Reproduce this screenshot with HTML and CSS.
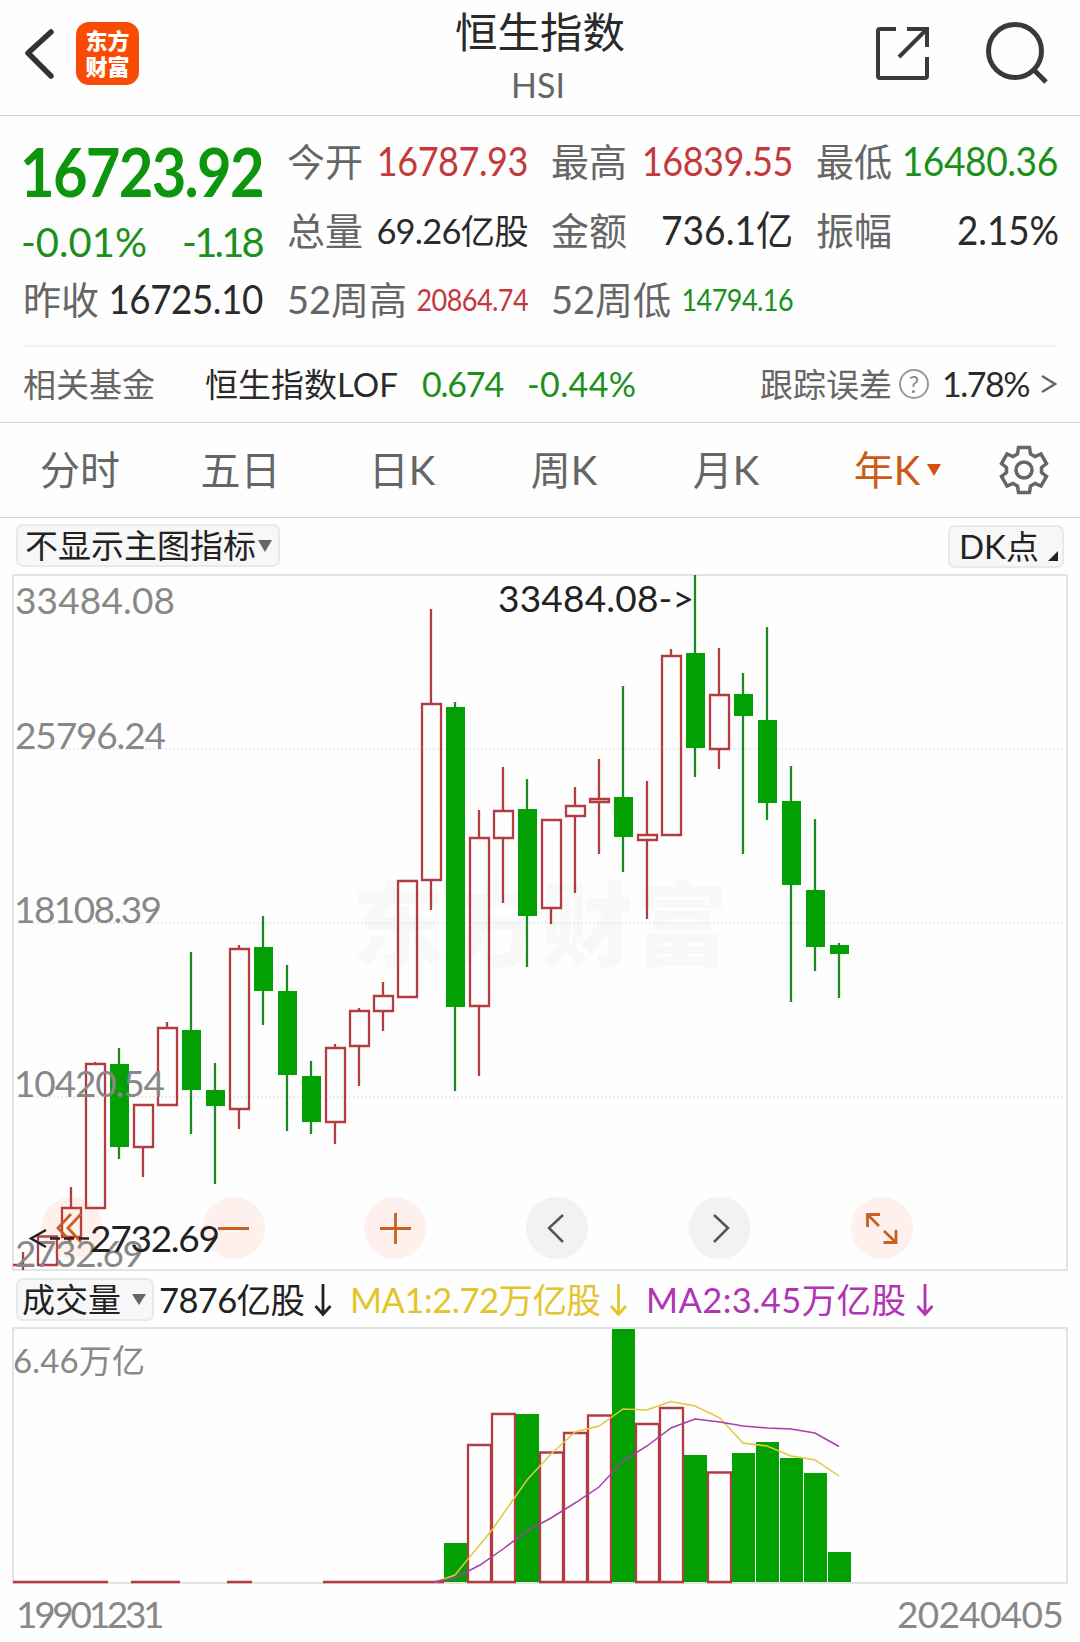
FILE: index.html
```html
<!DOCTYPE html>
<html lang="zh-CN">
<head>
<meta charset="utf-8">
<title>恒生指数 HSI</title>
<link rel="stylesheet" href="styles.css">
</head>
<body>
<header class="topbar">
  <div class="topbar-side">
    <svg class="back" width="32" height="56" viewBox="0 0 32 56"><path d="M27 7 4 28 27 51"/></svg>
    <div class="logo"><span>东方</span><span>财富</span></div>
  </div>
  <div class="titles">
    <h1>恒生指数</h1>
    <p>HSI</p>
  </div>
  <div class="topbar-side right">
    <svg class="share" width="56" height="56" viewBox="0 0 56 56"><path d="M22 4H6Q4 4 4 6V51Q4 53 6 53H51Q53 53 53 51V32M33 4H53V22M53 4 25 32"/></svg>
    <svg class="search" width="66" height="66" viewBox="0 0 66 66"><circle cx="31" cy="31" r="26.5"/><path d="M50 50 62 62"/></svg>
  </div>
</header>

<section class="quote">
  <div class="last">
    <div class="price">16723.92</div>
    <div class="change"><span class="pct">-0.01%</span><span class="chg">-1.18</span></div>
    <div class="prev"><span class="label">昨收</span><span class="num prev-num">16725.10</span></div>
  </div>
  <div class="stats">
    <div class="stat"><span class="label">今开</span><span class="num up">16787.93</span></div>
    <div class="stat"><span class="label">最高</span><span class="num up">16839.55</span></div>
    <div class="stat"><span class="label">最低</span><span class="num down wide">16480.36</span></div>
    <div class="stat"><span class="label">总量</span><span class="num mid">69.26亿股</span></div>
    <div class="stat"><span class="label">金额</span><span class="num amt">736.1亿</span></div>
    <div class="stat"><span class="label">振幅</span><span class="num ratio">2.15%</span></div>
    <div class="stat"><span class="label">52周高</span><span class="num small up">20864.74</span></div>
    <div class="stat"><span class="label">52周低</span><span class="num small down">14794.16</span></div>
  </div>
</section>

<section class="fund">
  <span class="fund-label">相关基金</span>
  <span class="fund-name">恒生指数LOF</span>
  <span class="fund-price down">0.674</span>
  <span class="fund-pct down">-0.44%</span>
  <span class="fund-err">跟踪误差</span>
  <span class="help">?</span>
  <span class="fund-val">1.78%</span>
  <svg class="more" width="16" height="20" viewBox="0 0 16 20"><path d="M1 2 14 10 1 18"/></svg>
</section>

<nav class="tabs">
  <span>分时</span><span>五日</span><span>日K</span><span>周K</span><span>月K</span>
  <span class="active">年K<i class="caret"></i></span>
  <svg class="gear" width="50" height="50" viewBox="-25 -25 50 50"><path d="M-5.500-22.500H5.500L6.500-16 11-13.500 17-16 22.500-6.500 17.500-2.500V2.500L22.500 6.500 17 16 11 13.500 6.500 16 5.500 22.500H-5.500L-6.500 16-11 13.500-17 16-22.500 6.500-17.500 2.500V-2.500L-22.500-6.500-17-16-11-13.500-6.500-16Z"/><circle r="8"/></svg>
</nav>

<div class="indicator">
  <button class="chip main-chip">不显示主图指标<i class="caret"></i></button>
  <button class="chip dk-chip">DK点<i class="corner"></i></button>
</div>

<div class="kchart">
  <svg width="1056" height="697" viewBox="12 574 1056 697">
    <text class="watermark" x="352" y="959" textLength="376">东方财富</text>
    <path class="grid" d="M13 749H1067M13 923H1067M13 1097H1067"/>
    <rect class="frame" x="13" y="575" width="1054" height="695"/>
    <path class="red" d="M23 1252V1270M13 1265H34M71 1187V1208M95 1062V1064M143 1148V1177M167 1022V1028M239 945V949M239 1110V1129M335 1044V1048M335 1122V1144M359 1008V1011M359 1046V1086M383 982V996M383 1011V1031M431 609V704M431 880V910M479 810V838M479 1006V1076M503 767V811M503 839V903M551 909V924M575 787V805M575 816V893M599 759V799M599 802V854M647 781V834M647 840V919M671 649V656M719 648V695M719 749V769"/>
    <path class="red" d="M38 1236.500H57V1265H38ZM62 1208H81V1237H62ZM86 1064H105V1208H86ZM134 1105H153V1147H134ZM158 1028H177V1105H158ZM230 949H249V1109H230ZM326 1048H345V1122H326ZM350 1011H369V1046H350ZM374 996H393V1011H374ZM398 881H417V997H398ZM422 704H441V880H422ZM470 838H489V1006H470ZM494 811H513V838H494ZM542 820H561V908H542ZM566 806H585V816H566ZM590 799H609V802H590ZM638 835H657V840H638ZM662 656H681V835H662ZM710 695H729V749H710Z"/>
    <path class="green-line" d="M119 1048V1159M191 952V1134M215 1063V1184M263 916V1025M287 965V1131M311 1061V1134M455 702V1091M527 779V967M623 686V872M695 575V777M743 673V854M767 627V820M791 766V1002M815 819V971M839 943V998"/>
    <path class="green" d="M110 1064h19v83h-19zM182 1030h19v60h-19zM206 1090h19v16h-19zM254 947h19v44h-19zM278 991h19v84h-19zM302 1076h19v46h-19zM446 707h19v300h-19zM518 809h19v107h-19zM614 797h19v40h-19zM686 653h19v95h-19zM734 694h19v22h-19zM758 720h19v83h-19zM782 801h19v84h-19zM806 890h19v57h-19zM830 945h19v9h-19z"/>
    <g class="hot"><circle cx="72" cy="1228" r="31"/><circle cx="234" cy="1228" r="31"/><circle cx="395" cy="1228" r="31"/><circle cx="882" cy="1228" r="31"/></g>
    <g class="calm"><circle cx="557" cy="1228" r="31"/><circle cx="719.500" cy="1228" r="31"/></g>
    <path class="hot-icon" d="M71 1214 58 1228 71 1242M81 1214 68 1228 81 1242M218 1228.500H249M380 1228.500H411M395.500 1213V1244M867.500 1227V1214.500H880M867.500 1214.500 879 1226M896 1230V1242.500H883.500M896 1242.500 884 1231"/>
    <path class="calm-icon" d="M563 1215 549 1228 563 1242M714 1215 728 1228 714 1242"/>
    <g class="axis">
      <text x="15" y="614" textLength="160">33484.08</text>
      <text x="15" y="749" textLength="151">25796.24</text>
      <text x="14" y="923" textLength="148">18108.39</text>
      <text x="14" y="1097" textLength="151">10420.54</text>
      <text x="15" y="1267" textLength="129">2732.69</text>
    </g>
    <g class="mark">
      <text x="498" y="611.500" textLength="196">33484.08-&gt;</text>
      <text x="90" y="1251.500" textLength="130">2732.69</text>
      <path d="M46 1230 31 1238.500 46 1247M50 1238.500H60M64 1238.500H74M79 1238.500H89"/>
    </g>
  </svg>
</div>

<div class="volume-bar">
  <button class="chip vol-chip">成交量<i class="caret"></i></button>
  <svg width="790" height="42" viewBox="154 1278 790 42">
    <g class="v-now"><text x="159" y="1312.500" textLength="146">7876亿股</text><path d="M323 1284V1314M315.500 1306 323 1314.500 330.500 1306"/></g>
    <g class="v-ma1"><text x="350" y="1312.500" textLength="251">MA1:2.72万亿股</text><path d="M618.500 1284V1314M611 1306 618.500 1314.500 626 1306"/></g>
    <g class="v-ma2"><text x="646" y="1312.500" textLength="260">MA2:3.45万亿股</text><path d="M925 1284V1314M917.500 1306 925 1314.500 932.500 1306"/></g>
  </svg>
</div>

<div class="vchart">
  <svg width="1056" height="257" viewBox="12 1327 1056 257">
    <rect class="frame" x="13" y="1328" width="1054" height="255"/>
    <path class="red base" d="M13 1582H108M131 1582H180M227 1582H252M323 1582H444"/>
    <path class="red" d="M468 1582V1445H491V1582ZM492 1582V1414H515V1582ZM540 1582V1452.500H563V1582ZM564 1582V1433H587V1582ZM588 1582V1415.500H611V1582ZM636 1582V1424H659V1582ZM660 1582V1408H683V1582ZM708 1582V1472.500H731V1582Z"/>
    <path class="green" d="M444 1543h23v39h-23zM516 1414h23v168h-23zM612 1329h23v253h-23zM684 1455h23v127h-23zM732 1453h23v129h-23zM756 1442h23v140h-23zM780 1458h23v124h-23zM804 1473h23v109h-23zM828 1552h23v30h-23z"/>
    <polyline class="ma1" points="435,1582 455,1575 468,1559 492,1530 527,1480 550,1455 575,1432 599,1426 623,1409 647,1410 671,1401.500 695,1406 720,1418 743,1443 767,1446 791,1456 815,1460 839,1476"/>
    <polyline class="ma2" points="433,1582 455,1578 480,1565 503,1549 527,1531 551,1518 575,1503 599,1487 623,1461 647,1446 671,1428 695,1419 720,1422 743,1426 767,1428 791,1429 815,1433 839,1446.500"/>
    <text class="vmax" x="13" y="1372.500" textLength="132">6.46万亿</text>
  </svg>
</div>

<footer class="dates"><span class="from">19901231</span><span class="to">20240405</span></footer>
</body>
</html>
```
FILE: styles.css
```css
* { box-sizing: border-box; }
body {
  margin: 0;
  width: 1080px;
  height: 1642px;
  overflow: hidden;
  background: #fefefe;
  color: #2a2a2a;
  font-family: Lato, "Noto Sans CJK SC", sans-serif;
}
svg { display: block; fill: none; }
h1, p { margin: 0; font-weight: 400; }
.up { color: #c43a3c; }
.down { color: #1b901b; }

.topbar {
  display: grid;
  grid-template-columns: 1fr 300px 1fr;
  height: 116px;
  border-bottom: 1px solid #d6d6d6;
}
.topbar-side { display: flex; align-items: flex-start; padding: 22px 0 0 24px; gap: 20px; }
.topbar-side.right { justify-content: flex-end; padding: 18px 30px 0 0; gap: 54px; }
.back { margin-top: 3px; stroke: #333; stroke-width: 5.5; stroke-linecap: round; stroke-linejoin: round; }
.logo {
  display: flex;
  flex-direction: column;
  align-items: center;
  justify-content: center;
  width: 63px;
  height: 63px;
  border-radius: 13px;
  background: #f94b05;
  color: #fff;
  font: 900 22px/27px "Noto Sans CJK SC", sans-serif;
}
.logo span { height: 26px; line-height: 22px; }
.share { margin-top: 7px; stroke: #3a3a3a; stroke-width: 4; }
.search { margin-top: 2px; stroke: #3a3a3a; stroke-width: 5; }
.titles { text-align: center; }
.titles h1 { height: 62px; font-size: 42.500px; line-height: 63px; }
.titles p { margin-left: -4px; color: #666; font-size: 34px; line-height: 45px; }

.quote { display: flex; gap: 26px; height: 229px; padding: 11px 24px 0 24px; }
.last { width: 238px; }
.price {
  width: 265px;
  height: 91px;
  margin-left: -4px;
  color: #0d960d;
  font-size: 66px;
  font-weight: 700;
  line-height: 89px;
  letter-spacing: -1.900px;
  transform: scaleX(.905);
  transform-origin: left;
}
.change, .prev, .stat { display: flex; justify-content: space-between; white-space: nowrap; }
.change { height: 46px; color: #1b901b; font-size: 40px; line-height: 48px; }
.pct { margin-left: -3px; letter-spacing: 0; }
.chg { letter-spacing: -2.800px; }
.prev { line-height: 71px; }
.stats { display: grid; grid-template-columns: 239px 240px 240px; grid-auto-rows: 69px; column-gap: 25px; line-height: 69px; }
.label { margin-left: -1px; color: #666; font-size: 38px; }
.num {
  margin-left: -30px;
  margin-right: -1px;
  font-size: 40px;
  letter-spacing: -.500px;
  transform: scaleX(.9);
  transform-origin: right;
}
.num.prev-num { transform: scaleX(.92); }
.num.wide { transform: scaleX(.93); }
.num.mid { font-size: 34.500px; letter-spacing: -.8px; transform: none; }
.num.amt { letter-spacing: 0; transform: scaleX(.93); }
.num.ratio { letter-spacing: 0; transform: scaleX(.92); margin-right: -2px; }
.num.small { font-size: 30px; transform: scaleX(.9); letter-spacing: -.6px; }

.fund {
  display: flex;
  align-items: center;
  height: 77px;
  margin: 0 23px;
  padding-bottom: 2px;
  border-top: 2px solid #f2f2f2;
  font-size: 33px;
  line-height: 72px;
  white-space: nowrap;
}
.fund-label { width: 182px; color: #666; }
.fund-name { width: 217px; letter-spacing: 0; }
.fund-price { width: 105px; font-size: 34px; letter-spacing: -1.200px; }
.fund-pct { width: 233px; font-size: 34px; letter-spacing: .400px; }
.fund-err { width: 139px; color: #666; }
.help {
  width: 30px;
  height: 30px;
  border: 2px solid #999;
  border-radius: 50%;
  color: #888;
  font-size: 23px;
  line-height: 26px;
  text-align: center;
}
.fund-val { margin-left: 13px; font-size: 34px; letter-spacing: -1.500px; }
.more { margin-left: auto; stroke: #666; stroke-width: 2.500; }

.tabs {
  display: grid;
  grid-template-columns: 160px 161px 162px 162px 162px 181px 71px;
  align-items: center;
  height: 96px;
  border-top: 1px solid #d6d6d6;
  border-bottom: 1px solid #d6d6d6;
  color: #666;
  font-size: 40px;
  line-height: 94px;
  text-align: center;
}
.tabs .active { color: #cc5a17; }
.caret {
  display: inline-block;
  border: 7px solid transparent;
  border-top: 12px solid currentColor;
  border-bottom: 0;
}
.tabs .caret { margin-left: 7px; margin-bottom: 9px; color: #d25010; }
.gear { justify-self: center; stroke: #666; stroke-width: 3.500; }

.indicator { display: flex; justify-content: space-between; height: 56px; padding: 6px 16px 0; }
.chip {
  display: flex;
  align-items: center;
  height: 43px;
  padding: 0 7px;
  border: 2px solid #e9e9e9;
  border-radius: 7px;
  background: #f7f7f8;
  color: #222;
  font: 33px/39px Lato, "Noto Sans CJK SC", sans-serif;
  white-space: nowrap;
}
.chip .caret { color: #666; }
.main-chip { width: 264px; }
.main-chip .caret { margin-left: 2px; flex: none; }
.dk-chip { width: 116px; margin-top: 1px; padding: 0 4px 0 9px; justify-content: space-between; }
.corner { align-self: flex-end; margin-bottom: 5px; border-left: 10px solid transparent; border-bottom: 10px solid #222; }

.kchart { height: 697px; padding-left: 12px; }
.frame { stroke: #e2e4e4; stroke-width: 2; }
.grid { stroke: #ececec; stroke-width: 2; stroke-dasharray: 2 2; }
.watermark { fill: #f8f8f8; font: 900 92px "Noto Sans CJK SC", sans-serif; }
.red { stroke: #b23c40; stroke-width: 2.300; }
.green-line { stroke: #1b8a22; stroke-width: 2.300; }
.green { fill: #02a002; }
.hot { fill: #ff6432; fill-opacity: .09; }
.calm { fill: #f2f2f2; }
.hot-icon { stroke: #c9601f; stroke-width: 2.800; }
.calm-icon { stroke: #555; stroke-width: 2.500; }
.axis text { fill: #888; font-size: 37px; }
.mark text { fill: #222; font-size: 37px; }
.mark path { stroke: #222; stroke-width: 2.500; }

.volume-bar { display: flex; height: 56px; padding: 7px 0 0 16px; }
.vol-chip { width: 138px; padding: 0 6px 0 4px; justify-content: space-between; }
.vol-chip .caret { border-top-width: 11px; }
.volume-bar text { font-size: 34.500px; stroke: none; }
.v-now { fill: #222; stroke: #222; }
.v-ma1 { fill: #e3c42c; stroke: #e3c42c; }
.v-ma2 { fill: #b034b4; stroke: #b034b4; }
.volume-bar path { fill: none; stroke-width: 2.800; }

.vchart { height: 257px; padding-left: 12px; }
.ma1 { stroke: #e0c83c; stroke-width: 1.500; }
.ma2 { stroke: #a83cae; stroke-width: 1.500; }
.vmax { fill: #888; font-size: 33px; }
.dates {
  display: flex;
  justify-content: space-between;
  padding: 0 17px 0 16px;
  color: #888;
  font-size: 37px;
  line-height: 60px;
}
.from { letter-spacing: -3.300px; }
.to { letter-spacing: -.700px; }
```
